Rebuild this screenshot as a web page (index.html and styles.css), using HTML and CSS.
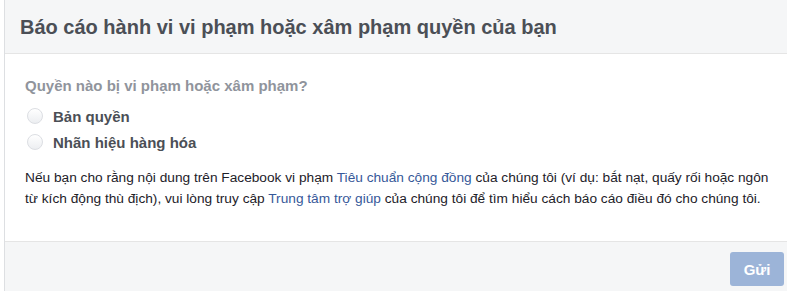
FILE: index.html
```html
<!DOCTYPE html>
<html lang="vi">
<head>
<meta charset="utf-8">
<link rel="stylesheet" href="styles.css">
</head>
<body>
<div class="dialog">
  <div class="header"><h1 class="title">Báo cáo hành vi vi phạm hoặc xâm phạm quyền của bạn</h1></div>
  <div class="body">
    <div class="question">Quyền nào bị vi phạm hoặc xâm phạm?</div>
    <label class="option"><span class="radio"></span><span class="opt-label">Bản quyền</span></label>
    <label class="option"><span class="radio"></span><span class="opt-label">Nhãn hiệu hàng hóa</span></label>
    <p class="note">Nếu bạn cho rằng nội dung trên Facebook vi phạm <a class="link">Tiêu chuẩn cộng đồng</a> của chúng tôi (ví dụ: bắt nạt, quấy rối hoặc ngôn từ kích động thù địch), vui lòng truy cập <a class="link">Trung tâm trợ giúp</a> của chúng tôi để tìm hiểu cách báo cáo điều đó cho chúng tôi.</p>
  </div>
  <div class="footer"><button class="submit">Gửi</button></div>
</div>
</body>
</html>
```
FILE: styles.css
```css
html, body { margin: 0; padding: 0; background: #fff; }
body { font-family: "Liberation Sans", Arial, sans-serif; }
.dialog {
  margin-left: 4px;
  border-left: 1px solid #dddfe2;
  height: 291px;
  display: flex;
  flex-direction: column;
}
.header {
  background: #f5f6f7;
  border-bottom: 1px solid #e5e5e5;
  height: 54px;
  box-sizing: border-box;
  display: flex;
  align-items: center;
  padding-left: 15px;
}
.title {
  margin: 0;
  font-size: 20px;
  font-weight: bold;
  color: #4b4f56;
  line-height: 24px;
}
.body {
  height: 187px;
  box-sizing: border-box;
  padding: 0 12px 0 20px;
}
.question {
  margin-top: 23px;
  font-size: 15px;
  font-weight: bold;
  color: #90949c;
  line-height: 18px;
}
.option {
  display: flex;
  align-items: center;
  height: 26px;
}
.question + .option { margin-top: 8px; }
.radio {
  width: 14px;
  height: 14px;
  border-radius: 50%;
  border: 1px solid #dcdee3;
  background: linear-gradient(#fff, #eceef1);
  margin-left: 2px;
  margin-right: 10px;
  box-sizing: content-box;
}
.opt-label {
  font-size: 15px;
  font-weight: bold;
  color: #4b4f56;
}
.note {
  margin: 12px 0 0 0;
  font-size: 13.7px;
  line-height: 21px;
  color: #1d2129;
}
.link { color: #365899; text-decoration: none; }
.footer {
  flex: 1;
  background: #f5f6f7;
  border-top: 1px solid #e5e5e5;
  display: flex;
  justify-content: flex-end;
  align-items: flex-start;
  padding: 10px 3px 0 0;
}
.submit {
  width: 54px;
  height: 34px;
  border: none;
  border-radius: 3px;
  background: #9cb4d8;
  color: #fff;
  font-family: "Liberation Sans", Arial, sans-serif;
  font-size: 15px;
  font-weight: bold;
  padding: 0;
}
```
